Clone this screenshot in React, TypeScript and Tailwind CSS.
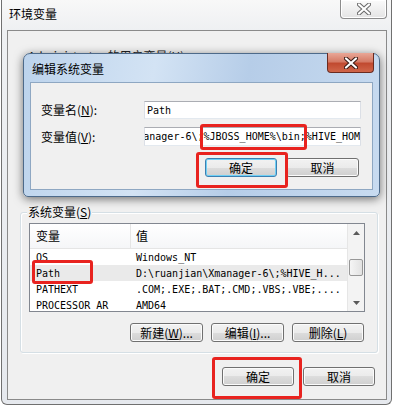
import React from "react";

const cjk = "font-['Noto_Sans_CJK_SC','Noto_Sans',sans-serif]";
const mono = "font-['DejaVu_Sans_Mono','Liberation_Mono',monospace]";

const btnBase =
  "flex items-center justify-center h-[19px] rounded-[3px] border text-[12px] leading-none text-black font-['Noto_Sans_CJK_SC','Noto_Sans',sans-serif]";
const btnNormal =
  "border-[#707070] bg-[linear-gradient(#f2f2f2_0%,#ebebeb_50%,#dddddd_50%,#cfcfcf_100%)] shadow-[inset_0_0_0_1px_#fbfbfb]";
const btnDefault =
  "border-[#3c7fb1] bg-[linear-gradient(#f2f2f2_0%,#ebebeb_50%,#dddddd_50%,#cfcfcf_100%)] shadow-[inset_0_0_0_1px_#6fd0f5]";

function XGlyph({ light }: { light?: boolean }) {
  return (
    <svg width="14" height="12" viewBox="0 0 14 12">
      <path
        d="M2 1.5 L12 10.5 M12 1.5 L2 10.5"
        stroke={light ? "#6a6a6a" : "#3a1a14"}
        strokeWidth="4.2"
        strokeLinecap="round"
      />
      <path
        d="M2 1.5 L12 10.5 M12 1.5 L2 10.5"
        stroke="#ffffff"
        strokeWidth="2.2"
        strokeLinecap="round"
      />
    </svg>
  );
}

function Arrow({ down }: { down?: boolean }) {
  return (
    <svg width="7" height="4" viewBox="0 0 7 4">
      <path d={down ? "M0 0 H7 L3.5 4 Z" : "M0 4 H7 L3.5 0 Z"} fill="#5a5a5a" />
    </svg>
  );
}

const rows: [string, string][] = [
  ["OS", "Windows_NT"],
  ["Path", "D:\\ruanjian\\Xmanager-6\\;%HIVE_H..."],
  ["PATHEXT", ".COM;.EXE;.BAT;.CMD;.VBS;.VBE;...."],
  ["PROCESSOR_AR", "AMD64"],
];

export default function App() {
  return (
    <div className="relative w-[394px] h-[406px] overflow-hidden bg-white">
      {/* main window */}
      <div className="relative ml-[1px] w-[391px] h-[405px] border-x border-b border-[#707070] rounded-b-[6px] bg-[linear-gradient(#f8f8f8_0px,#eef0f2_30px,#e6e9ee_100%)]">
        <div className={`h-[30px] flex items-center pl-[7px] pb-[2px] text-[12px] text-black ${cjk}`}>
          环境变量
        </div>
        <div className="absolute top-0 right-[4px] w-[47px] h-[19px] rounded-b-[4px] border border-t-0 border-[#8c8c8c] bg-[linear-gradient(#fbfbfb,#e4e4e4)] flex items-center justify-center shadow-[inset_0_0_0_1px_#ffffff]">
          <XGlyph light />
        </div>

        {/* client */}
        <div className="ml-[5px] w-[380px] h-[370px] border border-[#8a8a8a] bg-[#f0f0f0] flex flex-col">
          <div className={`h-[181px] shrink-0 pt-[17px] pl-[20px] text-[12px] leading-[16px] text-[#222] ${cjk}`}>
            Administrator 的用户变量(<span className="underline">U</span>)
          </div>

          {/* system variables group */}
          <div className="relative ml-[12px] mr-[8px] border border-[#d5dfe5] rounded-[3px] pt-[10px] pl-[8px] pr-[12px] pb-[10px] shadow-[inset_1px_1px_0_#ffffff,1px_1px_0_#ffffff]">
            <div className={`absolute -top-[9px] left-[6px] px-[1px] bg-[#f0f0f0] text-[12px] leading-[16px] text-black ${cjk}`}>
              系统变量(<span className="underline">S</span>)
            </div>
            <div className="h-[89px] border border-[#828790] bg-white flex overflow-hidden">
              <div className="flex-1 flex flex-col overflow-hidden">
                <div className={`h-[25px] shrink-0 flex border-b border-[#e5e5e5] bg-[linear-gradient(#ffffff,#f5f6f8)] text-[12px] text-black ${cjk}`}>
                  <div className="w-[101px] border-r border-[#e5e5e5] pl-[6px] flex items-center">变量</div>
                  <div className="flex-1 pl-[5px] flex items-center">值</div>
                </div>
                {rows.map(([k, v]) => (
                  <div
                    key={k}
                    className={`h-[16px] shrink-0 flex items-center text-[10px] text-black whitespace-nowrap ${mono} ${k === "Path" ? "bg-[#eaeaea]" : ""}`}
                  >
                    <div className="w-[101px] pl-[6px] overflow-hidden">{k}</div>
                    <div className="flex-1 pl-[5px] overflow-hidden">{v}</div>
                  </div>
                ))}
              </div>
              {/* scrollbar */}
              <div className="w-[17px] shrink-0 flex flex-col bg-[#f3f3f3] border-l border-[#e6e6e6]">
                <div className="h-[17px] flex items-center justify-center">
                  <Arrow />
                </div>
                <div className="h-[18px]" />
                <div className="mx-[1px] h-[17px] rounded-[2px] border border-[#979797] bg-[linear-gradient(90deg,#f5f5f5,#e2e2e2)]" />
                <div className="flex-1" />
                <div className="h-[17px] flex items-center justify-center">
                  <Arrow down />
                </div>
              </div>
            </div>
            <div className="mt-[11px] flex justify-end gap-[8px] pr-[1px]">
              <div className={`${btnBase} ${btnNormal} w-[73px]`}>
                新建(<span className="underline">W</span>)...
              </div>
              <div className={`${btnBase} ${btnNormal} w-[73px]`}>
                编辑(<span className="underline">I</span>)...
              </div>
              <div className={`${btnBase} ${btnNormal} w-[72px]`}>
                删除(<span className="underline">L</span>)
              </div>
            </div>
          </div>

          <div className="mt-[14px] mr-[11px] flex justify-end gap-[9px]">
            <div className={`${btnBase} ${btnNormal} w-[72px]`}>确定</div>
            <div className={`${btnBase} ${btnNormal} w-[72px]`}>取消</div>
          </div>
        </div>
      </div>

      {/* edit dialog */}
      <div className="absolute left-[23px] top-[53px] w-[357px] h-[144px] rounded-t-[7px] rounded-b-[5px] border border-[#4d6a8a] bg-[linear-gradient(100deg,#bcd3ec_0%,#d3e3f4_35%,#b6cde8_60%,#c8dbf0_100%)] shadow-[0_2px_10px_rgba(0,0,0,0.55)] flex flex-col">
        <div className={`h-[28px] shrink-0 flex items-center pl-[8px] pt-[1px] text-[12px] text-black ${cjk}`}>
          编辑系统变量
        </div>
        <div className="absolute top-[-1px] right-[5px] w-[47px] h-[20px] rounded-b-[4px] border border-t-0 border-[#6a2b20] bg-[linear-gradient(#e9a797_0%,#d57b66_45%,#c14a30_55%,#d0664a_100%)] flex items-center justify-center">
          <XGlyph />
        </div>
        <div className="mx-[6px] mb-[6px] flex-1 border border-[#8ea7c2] bg-[#f0f0f0] flex flex-col">
          <div className="pt-[18px] pl-[10px] pr-[11px] flex items-center">
            <div className={`w-[103px] text-[12px] text-black ${cjk}`}>
              变量名(<span className="underline">N</span>):
            </div>
            <div className={`flex-1 h-[18px] border border-[#abadb3] border-b-[#e3e9ef] border-x-[#dbdfe6] bg-white flex items-center pl-[2px] text-[10px] text-black ${mono}`}>
              Path
            </div>
          </div>
          <div className="mt-[8px] pl-[10px] pr-[11px] flex items-center">
            <div className={`w-[103px] text-[12px] text-black ${cjk}`}>
              变量值(<span className="underline">V</span>):
            </div>
            <div className={`flex-1 h-[19px] border border-[#abadb3] border-b-[#e3e9ef] border-x-[#dbdfe6] bg-white flex items-center overflow-hidden pl-[2px] text-[10px] text-black whitespace-nowrap ${mono}`}>
              <span className="ml-[-88px]">D:\ruanjian\Xmanager-6\;%JBOSS_HOME%\bin;%HIVE_HOME%\bin</span>
            </div>
          </div>
          <div className="mt-[12px] mr-[13px] flex justify-end gap-[9px]">
            <div className={`${btnBase} ${btnDefault} w-[72px]`}>确定</div>
            <div className={`${btnBase} ${btnNormal} w-[73px]`}>取消</div>
          </div>
        </div>
      </div>

      {/* red annotation boxes */}
      <div className="absolute left-[200px] top-[124px] w-[107px] h-[26px] border-[3px] border-[#e8231f] rounded-[3px]" />
      <div className="absolute left-[196px] top-[152px] w-[92px] h-[36px] border-[3px] border-[#e8231f] rounded-[3px]" />
      <div className="absolute left-[32px] top-[260px] w-[61px] h-[24px] border-[3px] border-[#e8231f] rounded-[3px]" />
      <div className="absolute left-[212px] top-[357px] w-[90px] h-[42px] border-[3px] border-[#e8231f] rounded-[3px]" />
    </div>
  );
}
